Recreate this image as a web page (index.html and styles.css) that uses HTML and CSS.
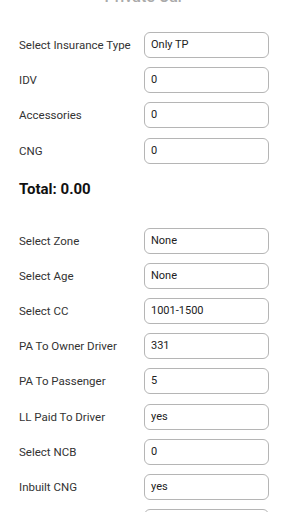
FILE: index.html
```html
<!DOCTYPE html>
<html lang="en">
<head>
    <meta charset="UTF-8">
    <title>Private Car</title>
    <link rel="stylesheet" href="styles.css">
</head>
<body>
<div class="page">
    <h1 class="title">Private Car</h1>

    <div class="section">
        <div class="row"><label>Select Insurance Type</label><div class="field">Only TP</div></div>
        <div class="row"><label>IDV</label><div class="field">0</div></div>
        <div class="row"><label>Accessories</label><div class="field">0</div></div>
        <div class="row"><label>CNG</label><div class="field">0</div></div>
    </div>

    <div class="total">Total: 0.00</div>

    <div class="section">
        <div class="row"><label>Select Zone</label><div class="field">None</div></div>
        <div class="row"><label>Select Age</label><div class="field">None</div></div>
        <div class="row"><label>Select CC</label><div class="field">1001-1500</div></div>
        <div class="row"><label>PA To Owner Driver</label><div class="field">331</div></div>
        <div class="row"><label>PA To Passenger</label><div class="field">5</div></div>
        <div class="row"><label>LL Paid To Driver</label><div class="field">yes</div></div>
        <div class="row"><label>Select NCB</label><div class="field">0</div></div>
        <div class="row"><label>Inbuilt CNG</label><div class="field">yes</div></div>
        <div class="row"><label></label><div class="field"></div></div>
    </div>
</div>
</body>
</html>
```

FILE: styles.css
```css
body {
    margin: 0;
    background: #fff;
    font-family: Roboto, "Liberation Sans", sans-serif;
    color: #333;
    overflow: hidden;
}
.page {
    padding: 0 19px;
}
.title {
    margin: -12px 0 0;
    height: 18px;
    font-size: 16px;
    line-height: 18px;
    font-weight: 500;
    text-align: center;
    color: #aaa;
}
.section {
    display: flex;
    flex-direction: column;
    gap: 9.2px;
}
.section:first-of-type { margin-top: 26px; }
.row {
    display: flex;
    align-items: center;
    height: 26px;
}
.row label {
    width: 125px;
    font-size: 11.5px;
}
.field {
    width: 125px;
    height: 26px;
    box-sizing: border-box;
    border: 1px solid #b5b5b5;
    border-radius: 6px;
    padding: 0 6px;
    font-size: 11px;
    line-height: 24px;
    color: #222;
}
.total {
    margin: 16px 0 30px;
    font-size: 15px;
    font-weight: 700;
    color: #111;
}
```
